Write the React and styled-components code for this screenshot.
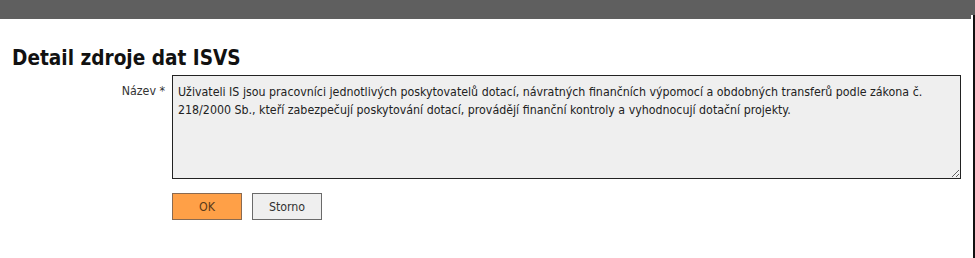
import React from "react";
import styled, { createGlobalStyle } from "styled-components";

const Global = createGlobalStyle`
  html, body { margin: 0; padding: 0; background: #fff; }
  body { font-family: Tahoma, "DejaVu Sans Condensed", "DejaVu Sans", sans-serif; color: #222; }
`;

const Shell = styled.div`
  display: flex;
  width: 975px;
  height: 258px;
  overflow: hidden;
`;

const Main = styled.div`
  flex: 1;
  display: flex;
  flex-direction: column;
`;

const TopBar = styled.div`
  height: 19px;
  background: #5f5f5f;
`;

const EdgeColumn = styled.div`
  width: 4px;
  display: flex;
  flex-direction: column;
`;

const EdgeTop = styled.div`
  height: 15px;
  background: #5f5f5f;
`;

const EdgeLine = styled.div`
  flex: 1;
  margin-left: 2px;
  border-left: 2px solid #111;
`;

const Content = styled.div`
  padding: 0 10px 0 12px;
`;

const Title = styled.h1`
  margin: 26px 0 4px 0;
  font-family: Tahoma, "DejaVu Sans Condensed", "DejaVu Sans", sans-serif;
  font-weight: bold;
  font-size: 20.6px;
  line-height: 26px;
  color: #111;
`;

const FormGrid = styled.div`
  display: grid;
  grid-template-columns: 153px 1fr;
  column-gap: 7px;
  row-gap: 14px;
`;

const Label = styled.label`
  text-align: right;
  font-size: 12.3px;
  line-height: 18px;
  padding-top: 7px;
  color: #333;
`;

const TextArea = styled.textarea`
  box-sizing: border-box;
  width: 789px;
  height: 104px;
  margin: 0;
  padding: 7px 5px;
  background: #efefef;
  border: 1px solid #222;
  border-radius: 0;
  font-family: Tahoma, "DejaVu Sans Condensed", "DejaVu Sans", sans-serif;
  font-size: 12.3px;
  line-height: 18px;
  color: #222;
  resize: both;
  outline: none;
  display: block;
`;

const Buttons = styled.div`
  grid-column: 2;
  display: flex;
  gap: 10px;
`;

const Button = styled.button`
  box-sizing: border-box;
  width: 70px;
  height: 27px;
  font-family: Tahoma, "DejaVu Sans Condensed", "DejaVu Sans", sans-serif;
  font-size: 12.3px;
  color: ${(p) => (p.$primary ? "#5a3a1a" : "#333")};
  background: ${(p) => (p.$primary ? "#ffa047" : "#efefef")};
  border: 1px solid ${(p) => (p.$primary ? "#8a6a50" : "#6a6a6a")};
  border-radius: 0;
  padding: 0;
  cursor: pointer;
`;

const text =
  "Uživateli IS jsou pracovníci jednotlivých poskytovatelů dotací, návratných finančních výpomocí a obdobných transferů podle zákona č. 218/2000 Sb., kteří zabezpečují poskytování dotací, provádějí finanční kontroly a vyhodnocují dotační projekty.";

export default function App() {
  return (
    <>
      <Global />
      <Shell>
        <Main>
          <TopBar />
          <Content>
            <Title>Detail zdroje dat ISVS</Title>
            <FormGrid>
              <Label htmlFor="nazev">Název *</Label>
              <TextArea id="nazev" readOnly value={text} />
              <Buttons>
                <Button $primary>OK</Button>
                <Button>Storno</Button>
              </Buttons>
            </FormGrid>
          </Content>
        </Main>
        <EdgeColumn>
          <EdgeTop />
          <EdgeLine />
        </EdgeColumn>
      </Shell>
    </>
  );
}
